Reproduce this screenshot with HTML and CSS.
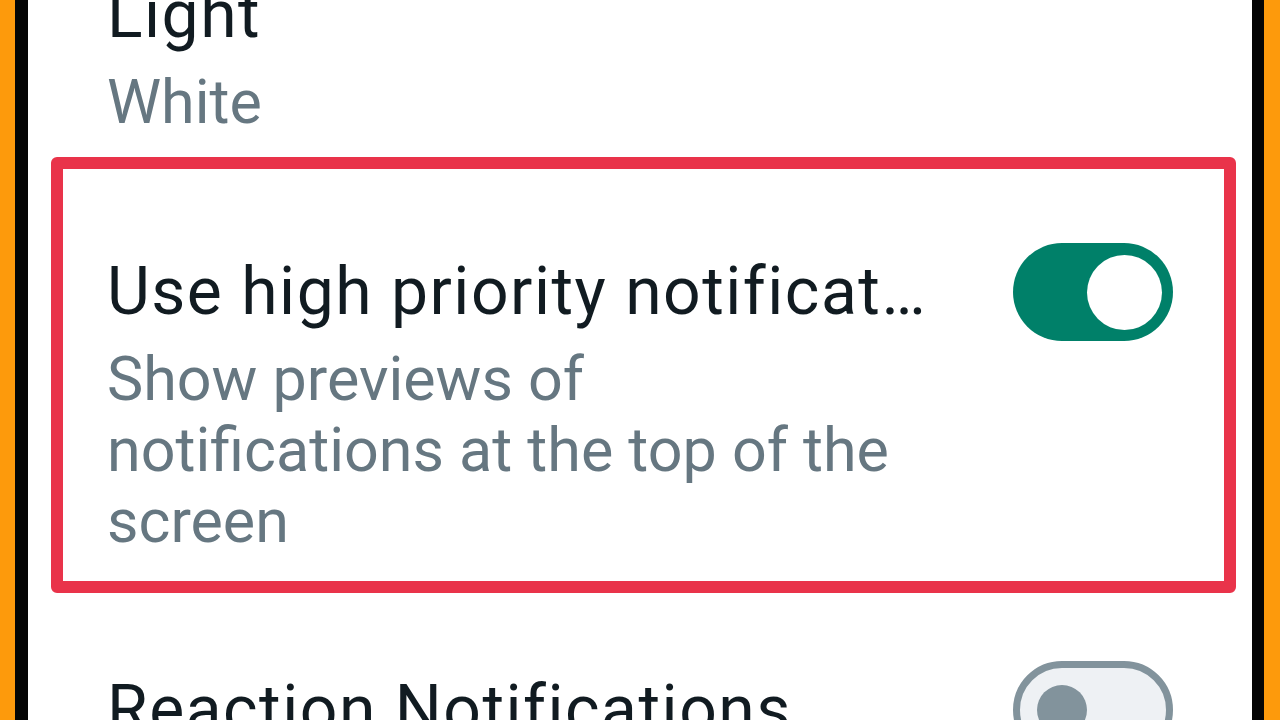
FILE: index.html
```html
<!DOCTYPE html>
<html lang="en">
<head>
<meta name="viewport" content="width=device-width, initial-scale=1">
<link rel="stylesheet" href="styles.css">
</head>
<body>
	<div id="phone">
		<div class="list">
			<div class="item">
				<div class="title">Light</div>
				<div class="sub">White</div>
			</div>

			<div class="highlight">
				<div class="item">
					<div class="title">Use high priority notifications</div>
					<div class="switch on"><div></div></div>
					<div class="sub">Show previews of notifications at the top of the screen</div>
				</div>
			</div>

			<div class="item next">
				<div class="title">Reaction Notifications</div>
				<div class="switch"><div></div></div>
				<div class="sub">Show notifications for reactions to messages you send</div>
			</div>
		</div>
	</div>
</body>
</html>
```

FILE: styles.css
```css
:root {
	--orange:#fd9a0c;
	--frame:#050505;
	--green:#008069;
	--red:#e9334a;
	--text:#111b21;
	--grey:#667781;
}

* {
	box-sizing:border-box;
	font-family:Roboto, "Noto Sans", sans-serif;
}

html, body {
	margin:0;
	height:100vh;
	overflow:hidden;
}

body {
	background-color:var(--orange);
}

#phone {
	margin-left:15px;
	width:1249px;
	height:720px;
	border-left:13px solid var(--frame);
	border-right:12px solid var(--frame);
	background-color:white;
	overflow:hidden;
}

.list {
	margin-top:-34px;
}

.item {
	display:grid;
	grid-template-columns:1fr 160px;
	column-gap:80px;
	align-items:center;
	padding:0 79px;
}

.title {
	font-size:66px;
	line-height:98px;
	letter-spacing:1.5px;
	color:var(--text);
	white-space:nowrap;
	overflow:hidden;
	text-overflow:ellipsis;
}

.sub {
	grid-column:1;
	max-width:816px;
	margin-top:3px;
	font-size:61px;
	line-height:71px;
	color:var(--grey);
}

.highlight {
	margin:19px 16px 0 23px;
	border:12px solid var(--red);
	border-radius:6px;
}

.highlight .item {
	padding:74px 51px 24px 44px;
}

.item.next {
	margin-top:68px;
}

/* switches */
.switch {
	position:relative;
	width:160px;
	height:98px;
	border-radius:49px;
	background-color:#eef1f4;
	border:7px solid #82939c;
}

.switch > div {
	position:absolute;
	left:17px;
	top:17px;
	width:50px;
	height:50px;
	border-radius:50%;
	background-color:#82939c;
}

.switch.on {
	background-color:var(--green);
	border:none;
}

.switch.on > div {
	left:auto;
	right:11px;
	top:12px;
	width:75px;
	height:75px;
	background-color:white;
}
```
